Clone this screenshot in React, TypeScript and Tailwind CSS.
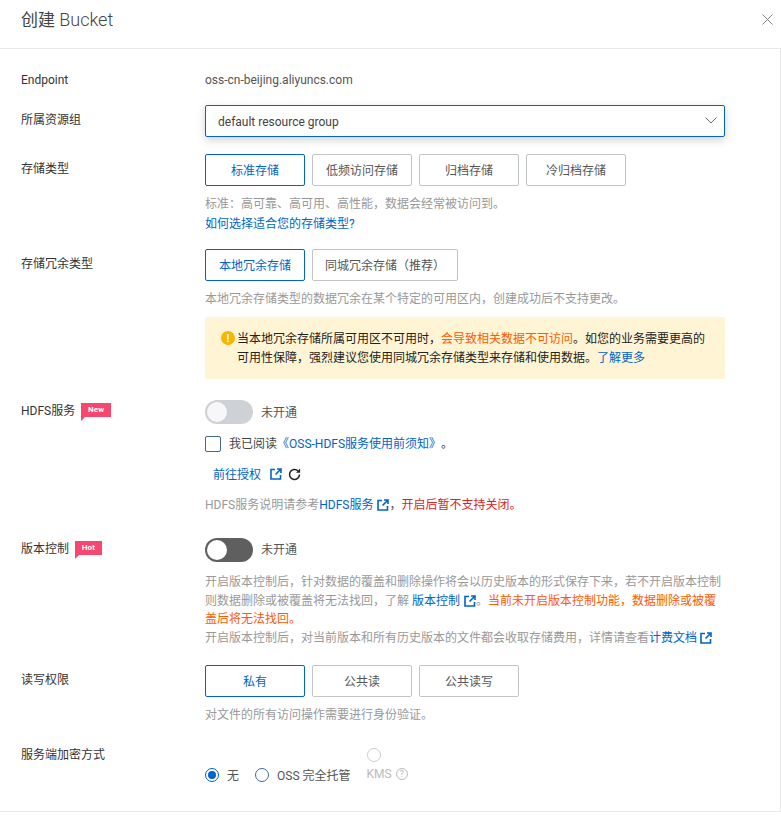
import {ReactNode} from "react";

const FONT = "font-['Roboto','Noto_Sans_CJK_SC',sans-serif]";

function ExternalIcon({className = ""}: {className?: string}) {
    return (
        <svg viewBox="0 0 12 12" className={`inline-block w-[12px] h-[12px] text-[#0064c8] ${className}`} fill="none" stroke="currentColor">
            <path d="M5 1.5H1v9.500h9.500V7" strokeWidth="1.6" />
            <path d="M7 1h4v4M11 1L5.500 6.500" strokeWidth="1.600" />
        </svg>
    );
}

function Option({children, active, wide}: {children: ReactNode; active?: boolean; wide?: boolean}) {
    return (
        <div
            className={`h-8 flex items-center justify-center border rounded-[2px] text-xs pt-[1px] ${wide ? "w-[146px]" : "w-[100px]"} ${
                active ? "border-[#0064c8] text-[#0064c8]" : "border-[#c1c5ca] text-[#555]"
            }`}
        >
            {children}
        </div>
    );
}

function Label({children, top}: {children: ReactNode; top: string}) {
    return <div className={`w-[184px] shrink-0 text-xs text-[#333] flex items-center ${top}`}>{children}</div>;
}

function Tag({text, width}: {text: string; width: string}) {
    return (
        <span className={`relative ml-[6px] h-[14px] ${width} bg-[#f8476f] text-white text-[8px] font-bold flex items-center justify-center tracking-wide`}>
            {text}
            <span className="absolute left-0 top-full border-t-[4px] border-r-[4px] border-t-[#f8476f] border-r-transparent" />
        </span>
    );
}

function Help({children, className = ""}: {children: ReactNode; className?: string}) {
    return <div className={`text-xs text-[#999] ${className}`}>{children}</div>;
}

export default function App() {
    return (
        <div className={`w-[781px] h-[817px] bg-white overflow-hidden ${FONT}`}>
            <header className="h-[49px] flex items-center justify-between pl-[21px] pr-[7px] pb-[8px] border-b border-[#e9e9eb]">
                <h1 className="text-[17px] text-[#444]">创建 <span className="text-[18px] font-light">Bucket</span></h1>
                <svg viewBox="0 0 12 12" className="w-[11px] h-[11px] mb-[2px] mr-[1px] text-[#777]" fill="none" stroke="currentColor" strokeWidth="1">
                    <path d="M.5.5l11 11M11.500.5l-11 11" />
                </svg>
            </header>

            <main className="h-[763px] border-r border-b border-[#e9e9eb] pl-[21px] pt-[22px]">
                <div className="flex h-[18px] items-center">
                    <Label top="">Endpoint</Label>
                    <span className="text-xs text-[#555]">oss-cn-beijing.aliyuncs.com</span>
                </div>

                <div className="flex mt-[16px]">
                    <Label top="h-[30px]">所属资源组</Label>
                    <div className="w-[520px] h-8 border border-[#0064c8] rounded-[2px] shadow-[0_3px_8px_rgba(0,0,0,0.18)] flex items-center justify-between pl-[12px] pr-[7px] pt-[1px] text-xs text-[#444]">
                        default resource group
                        <svg viewBox="0 0 12 7" className="w-[12px] h-[7px] mb-[3px] text-[#666]" fill="none" stroke="currentColor">
                            <path d="M.5.5L6 6l5.500-5.500" />
                        </svg>
                    </div>
                </div>

                <div className="flex mt-[17px]">
                    <Label top="h-[30px]">存储类型</Label>
                    <div>
                        <div className="flex gap-[7px]">
                            <Option active>标准存储</Option>
                            <Option>低频访问存储</Option>
                            <Option>归档存储</Option>
                            <Option>冷归档存储</Option>
                        </div>
                        <Help className="mt-[9px] leading-[19px]">标准：高可靠、高可用、高性能，数据会经常被访问到。</Help>
                        <div className="text-xs leading-[19px] mt-[1px] text-[#0064c8]">如何选择适合您的存储类型?</div>
                    </div>
                </div>

                <div className="flex mt-[15px]">
                    <Label top="h-[30px]">存储冗余类型</Label>
                    <div>
                        <div className="flex gap-[7px]">
                            <Option active>本地冗余存储</Option>
                            <Option wide>同城冗余存储（推荐）</Option>
                        </div>
                        <Help className="mt-[9px] leading-[19px]">本地冗余存储类型的数据冗余在某个特定的可用区内，创建成功后不支持更改。</Help>
                        <div className="relative mt-[8px] w-[520px] h-[62px] bg-[#fff5d5] rounded-[2px] pl-[32px] pt-[13px] text-xs leading-[19px] text-[#222]">
                            <span className="absolute left-[16px] top-[14px] w-[14px] h-[14px] rounded-full bg-[#f9b500] text-white text-[11px] font-bold flex items-center justify-center">!</span>
                            <div>当本地冗余存储所属可用区不可用时，<span className="text-[#ff5a00]">会导致相关数据不可访问</span>。如您的业务需要更高的</div>
                            <div>可用性保障，强烈建议您使用同城冗余存储类型来存储和使用数据。<span className="text-[#0064c8]">了解更多</span></div>
                        </div>
                    </div>
                </div>

                <div className="flex mt-[21px]">
                    <Label top="h-[24px] items-start pt-[3px]">
                        HDFS服务
                        <Tag text="New" width="w-[30px]" />
                    </Label>
                    <div>
                        <div className="flex items-center h-6">
                            <span className="w-12 h-6 rounded-full bg-[#ced1d5] flex items-center pl-[2px]">
                                <span className="w-5 h-5 rounded-full bg-[#f7f7f8]" />
                            </span>
                            <span className="ml-2 pt-[1px] text-xs text-[#555]">未开通</span>
                        </div>
                        <div className="flex items-center mt-[12px] h-4 text-xs text-[#444]">
                            <span className="w-4 h-4 border border-[#3f6a9a] rounded-[2px]" />
                            <span className="ml-2">我已阅读</span>
                            <span className="text-[#0064c8]">《OSS-HDFS服务使用前须知》</span>
                            <span>。</span>
                        </div>
                        <div className="flex items-center mt-[14px] pl-2 h-[16px] text-xs text-[#0064c8]">
                            <span className="pt-[1px]">前往授权</span>
                            <ExternalIcon className="ml-[9px]" />
                            <svg viewBox="0 0 24 24" className="ml-[5px] w-[15px] h-[15px] text-[#222]" fill="none" stroke="currentColor" strokeWidth="2.500">
                                <path d="M20 12a8 8 0 1 1-2.500-5.800" />
                                <path d="M21 2.500v6.500h-6.500" fill="currentColor" stroke="none" />
                            </svg>
                        </div>
                        <Help className="mt-[14px] leading-[18px] flex items-center">
                            HDFS服务说明请参考<span className="text-[#0064c8]">HDFS服务</span>
                            <ExternalIcon className="ml-[4px]" />
                            <span className="text-[#555]">，</span>
                            <span className="text-[#d9231e]">开启后暂不支持关闭。</span>
                        </Help>
                    </div>
                </div>

                <div className="flex mt-[24px]">
                    <Label top="h-[24px] items-start pt-[3px]">
                        版本控制
                        <Tag text="Hot" width="w-[27px]" />
                    </Label>
                    <div className="w-[520px]">
                        <div className="flex items-center h-6">
                            <span className="w-12 h-6 rounded-full bg-[#5f5f5f] flex items-center pl-[2px]">
                                <span className="w-5 h-5 rounded-full bg-white" />
                            </span>
                            <span className="ml-2 text-xs text-[#555]">未开通</span>
                        </div>
                        <Help className="mt-[11px] leading-[18.500px]">
                            <div>开启版本控制后，针对数据的覆盖和删除操作将会以历史版本的形式保存下来，若不开启版本控制</div>
                            <div>
                                则数据删除或被覆盖将无法找回，了解
                                <span className="text-[#0064c8]"> 版本控制 </span>
                                <ExternalIcon className="align-[-2px] ml-[1px]" />
                                。<span className="text-[#ff5a00]">当前未开启版本控制功能，数据删除或被覆</span>
                            </div>
                            <div className="text-[#ff5a00]">盖后将无法找回。</div>
                            <div>
                                开启版本控制后，对当前版本和所有历史版本的文件都会收取存储费用，详情请查看<span className="text-[#0064c8]">计费文档 </span>
                                <ExternalIcon className="align-[-2px]" />
                            </div>
                        </Help>
                    </div>
                </div>

                <div className="flex mt-[18px]">
                    <Label top="h-[30px]">读写权限</Label>
                    <div>
                        <div className="flex gap-[7px]">
                            <Option active>私有</Option>
                            <Option>公共读</Option>
                            <Option>公共读写</Option>
                        </div>
                        <Help className="mt-[9px] leading-[19px]">对文件的所有访问操作需要进行身份验证。</Help>
                    </div>
                </div>

                <div className="flex mt-[19px]">
                    <Label top="h-[22px]">服务端加密方式</Label>
                    <div className="flex items-end h-[40px] text-xs text-[#555]">
                        <span className="w-[14px] h-[14px] rounded-full border border-[#0064c8] flex items-center justify-center mb-[2px]">
                            <span className="w-2 h-2 rounded-full bg-[#0064c8]" />
                        </span>
                        <span className="ml-2 leading-[16px]">无</span>
                        <span className="ml-4 w-[14px] h-[14px] rounded-full border border-[#3f6a9a] mb-[2px]" />
                        <span className="ml-[8px] leading-[16px]">OSS 完全托管</span>
                        <div className="ml-[16px] flex flex-col items-start mb-[3px]">
                            <span className="w-[14px] h-[14px] rounded-full border border-[#c9ced4]" />
                            <span className="mt-[5px] leading-[14px] text-[#bbb] flex items-center">
                                KMS
                                <span className="ml-[4px] w-[12px] h-[12px] rounded-full border border-[#bbb] text-[9px] flex items-center justify-center">?</span>
                            </span>
                        </div>
                    </div>
                </div>
            </main>
        </div>
    );
}
